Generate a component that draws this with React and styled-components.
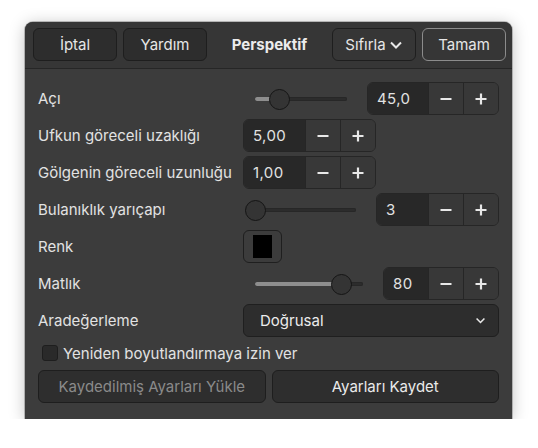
import React from 'react'
import styled, { createGlobalStyle } from 'styled-components'

const Global = createGlobalStyle`
  html, body {
    margin: 0;
    background: #ffffff;
  }
  body {
    padding: 22px 0 0 25px;
    font-family: Inter, "Noto Sans", sans-serif;
    font-size: 15px;
    color: #e2e2e2;
  }
`;

const Janela = styled.div`
  width: 487px;
  height: 397px;
  box-sizing: border-box;
  background: #3c3c3c;
  border-radius: 8px 8px 0 0;
  box-shadow: 0 2px 16px rgba(0, 0, 0, 0.25), 0 0 0 1px rgba(0, 0, 0, 0.22);
  display: flex;
  flex-direction: column;
  overflow: hidden;
`;

const Cabecalho = styled.header`
  height: 48px;
  box-sizing: border-box;
  background: #363636;
  border-bottom: 1px solid #262626;
  display: flex;
  align-items: center;
  padding: 0 6px 1px 8px;
  gap: 6px;
`;

const Botao = styled.button`
  width: 84px;
  height: 33px;
  box-sizing: border-box;
  border-radius: 6px;
  border: 1px solid ${p => (p.$destaque ? '#8c8c8c' : '#1e1e1e')};
  background: ${p => (p.$escuro ? '#2d2d2d' : '#363636')};
  color: #e6e6e6;
  font-family: inherit;
  font-size: 15px;
  display: flex;
  align-items: center;
  justify-content: center;
  gap: 3px;
  padding: 0;
`;

const Titulo = styled.div`
  flex: 1;
  text-align: center;
  font-weight: 700;
  font-size: 15px;
  color: #ececec;
`;

const Corpo = styled.div`
  padding: 13px 13px 16px 13px;
  display: flex;
  flex-direction: column;
`;

const Grade = styled.div`
  display: grid;
  grid-template-columns: 205px 1fr;
  grid-auto-rows: 33px;
  row-gap: 4px;
`;

const Rotulo = styled.div`
  display: flex;
  align-items: center;
  white-space: nowrap;
`;

const Controle = styled.div`
  display: flex;
  align-items: center;
  justify-content: space-between;
  gap: 10px;
`;

const Trilho = styled.div`
  flex: 1;
  margin-left: 2px;
  height: 22px;
  position: relative;
  padding: 0 10px;
  display: flex;
  align-items: center;
`;

const TrilhoLinha = styled.div`
  flex: 1;
  height: 4px;
  border-radius: 2px;
  background: #2c2c2c;
  box-shadow: inset 0 0 0 1px #272727;
  position: relative;
`;

const TrilhoCheio = styled.div`
  position: absolute;
  left: 0;
  top: 0;
  bottom: 0;
  border-radius: 2px;
  background: #8e8e8e;
`;

const Botaozinho = styled.div`
  position: absolute;
  top: 50%;
  width: 19px;
  height: 19px;
  margin: -10px 0 0 -10px;
  border-radius: 50%;
  background: #343434;
  border: 1px solid #151515;
`;

const Giro = styled.div`
  display: flex;
  height: 33px;
  box-sizing: border-box;
  border: 1px solid #262626;
  border-radius: 6px;
  overflow: hidden;
  flex-shrink: 0;
`;

const GiroEntrada = styled.div`
  width: ${p => p.$largura}px;
  background: #282828;
  display: flex;
  align-items: center;
  padding-left: ${p => p.$recuo}px;
  box-sizing: border-box;
  letter-spacing: 0.4px;
`;

const GiroBotao = styled.div`
  width: 35px;
  box-sizing: border-box;
  background: #383838;
  border-left: 1px solid #262626;
  display: flex;
  align-items: center;
  justify-content: center;
`;

const CorBotao = styled.div`
  width: 39px;
  height: 33px;
  box-sizing: border-box;
  border: 1px solid #1f1f1f;
  border-radius: 6px;
  padding: 4px 9px;
  display: flex;
`;

const CorAmostra = styled.div`
  flex: 1;
  background: #000;
`;

const Combo = styled.div`
  flex: 1;
  height: 33px;
  box-sizing: border-box;
  background: #2d2d2d;
  border: 1px solid #1f1f1f;
  border-radius: 6px;
  display: flex;
  align-items: center;
  justify-content: space-between;
  padding: 0 12px 0 16px;
  color: #ececec;
`;

const Marcar = styled.label`
  display: flex;
  align-items: center;
  gap: 5px;
  height: 24px;
  margin-top: 4px;
  padding-left: 4px;
`;

const Caixa = styled.span`
  width: 16px;
  height: 16px;
  box-sizing: border-box;
  border-radius: 3px;
  background: #2a2a2a;
  border: 1px solid #1e1e1e;
`;

const Rodape = styled.div`
  display: grid;
  grid-template-columns: 1fr 1fr;
  gap: 6px;
  margin-top: 5px;
`;

const RodapeBotao = styled.button`
  height: 33px;
  box-sizing: border-box;
  border-radius: 6px;
  border: 1px solid #1e1e1e;
  background: #2e2e2e;
  color: ${p => (p.disabled ? '#8a8a8a' : '#eaeaea')};
  font-family: inherit;
  font-size: 15px;
  padding: 0;
`;

const Menos = () => (
  <svg width="14" height="14" viewBox="0 0 14 14">
    <path d="M1.5 7h11" stroke="#e8e8e8" strokeWidth="2.2" />
  </svg>
);

const Mais = () => (
  <svg width="14" height="14" viewBox="0 0 14 14">
    <path d="M1.5 7h11M7 1.5v11" stroke="#e8e8e8" strokeWidth="2.2" />
  </svg>
);

const Seta = ({ tamanho = 14 }) => (
  <svg width={tamanho} height={tamanho} viewBox="0 0 14 14">
    <path d="M2 4.5l5 5 5-5" fill="none" stroke="#e8e8e8" strokeWidth="2" />
  </svg>
);

function Deslizador({ valor }) {
  return (
    <Trilho>
      <TrilhoLinha>
        <TrilhoCheio style={{ width: `${valor * 100}%` }} />
        <Botaozinho style={{ left: `${valor * 100}%` }} />
      </TrilhoLinha>
    </Trilho>
  );
}

function Giratorio({ valor, largura, recuo = 9 }) {
  return (
    <Giro>
      <GiroEntrada $largura={largura} $recuo={recuo}>{valor}</GiroEntrada>
      <GiroBotao><Menos /></GiroBotao>
      <GiroBotao><Mais /></GiroBotao>
    </Giro>
  );
}

export default function App() {
  return (
    <>
      <Global />
      <Janela>
        <Cabecalho>
          <Botao $escuro>İptal</Botao>
          <Botao $escuro>Yardım</Botao>
          <Titulo>Perspektif</Titulo>
          <Botao>Sıfırla <Seta /></Botao>
          <Botao $destaque>Tamam</Botao>
        </Cabecalho>
        <Corpo>
          <Grade>
            <Rotulo>Açı</Rotulo>
            <Controle>
              <Deslizador valor={0.26} />
              <Giratorio valor="45,0" largura={60} />
            </Controle>

            <Rotulo>Ufkun göreceli uzaklığı</Rotulo>
            <Controle>
              <Giratorio valor="5,00" largura={61} />
            </Controle>

            <Rotulo>Gölgenin göreceli uzunluğu</Rotulo>
            <Controle>
              <Giratorio valor="1,00" largura={61} />
            </Controle>

            <Rotulo>Bulanıklık yarıçapı</Rotulo>
            <Controle>
              <Deslizador valor={0} />
              <Giratorio valor="3" largura={51} />
            </Controle>

            <Rotulo>Renk</Rotulo>
            <Controle>
              <CorBotao><CorAmostra /></CorBotao>
            </Controle>

            <Rotulo>Matlık</Rotulo>
            <Controle>
              <Deslizador valor={0.8} />
              <Giratorio valor="80" largura={44} />
            </Controle>

            <Rotulo>Aradeğerleme</Rotulo>
            <Controle>
              <Combo>Doğrusal <Seta tamanho={11} /></Combo>
            </Controle>
          </Grade>
          <Marcar>
            <Caixa />
            Yeniden boyutlandırmaya izin ver
          </Marcar>
          <Rodape>
            <RodapeBotao disabled>Kaydedilmiş Ayarları Yükle</RodapeBotao>
            <RodapeBotao>Ayarları Kaydet</RodapeBotao>
          </Rodape>
        </Corpo>
      </Janela>
    </>
  )
}
